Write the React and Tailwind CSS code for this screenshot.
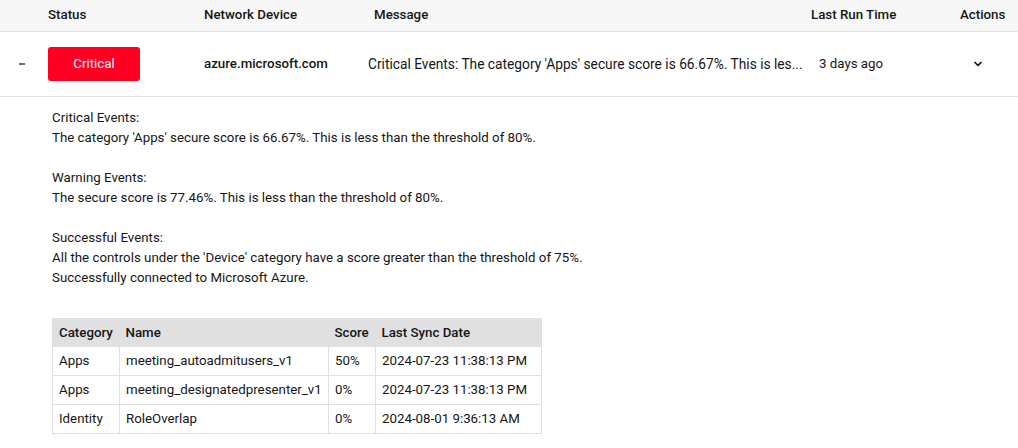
import { ChevronDown } from 'lucide-react';

const rows = [
    { category: 'Apps', name: 'meeting_autoadmitusers_v1', score: '50%', date: '2024-07-23 11:38:13 PM' },
    { category: 'Apps', name: 'meeting_designatedpresenter_v1', score: '0%', date: '2024-07-23 11:38:13 PM' },
    { category: 'Identity', name: 'RoleOverlap', score: '0%', date: '2024-08-01 9:36:13 AM' },
];

const App = () => {
    return (
        <div className="w-[1018px] h-[448px] bg-white text-[#161616] text-[13.3px] overflow-hidden" style={{ fontFamily: "Roboto, 'Liberation Sans', sans-serif" }}>
            {/* En-tête du tableau */}
            <div className="grid grid-cols-[48px_156px_164px_443px_149px_58px] h-[32px] pb-[2px] items-center bg-[#f7f7f7] border-b border-[#e0e0e0] font-medium">
                <div />
                <div>Status</div>
                <div>Network Device</div>
                <div className="pl-[6px]">Message</div>
                <div>Last Run Time</div>
                <div>Actions</div>
            </div>

            {/* Ligne principale */}
            <div className="grid grid-cols-[48px_156px_164px_443px_149px_58px] h-[65px] items-center border-b border-[#e0e0e0]">
                <div className="flex justify-center pr-[4px]">
                    <span className="block w-[6px] h-[2px] bg-[#6f6f6f]" />
                </div>
                <div>
                    <span className="flex items-center justify-center w-[92px] h-[34px] rounded-[3px] bg-[#ff0022] text-white">Critical</span>
                </div>
                <div className="font-medium">azure.microsoft.com</div>
                <div className="whitespace-nowrap overflow-hidden text-[13.75px]">Critical Events: The category 'Apps' secure score is 66.67%. This is les...</div>
                <div className="pl-[8px]">3 days ago</div>
                <div className="flex pl-[12px]">
                    <ChevronDown size={12} strokeWidth={3.5} />
                </div>
            </div>

            {/* Détails */}
            <div className="pl-[52px] pt-[11px] leading-[20px]">
                <p>Critical Events:</p>
                <p>The category 'Apps' secure score is 66.67%. This is less than the threshold of 80%.</p>
                <p className="mt-[20px]">Warning Events:</p>
                <p>The secure score is 77.46%. This is less than the threshold of 80%.</p>
                <p className="mt-[20px]">Successful Events:</p>
                <p>All the controls under the 'Device' category have a score greater than the threshold of 75%.</p>
                <p>Successfully connected to Microsoft Azure.</p>

                <table className="mt-[30px] table-fixed w-[489px] border-collapse border border-[#e0e0e0]">
                    <thead>
                        <tr className="bg-[#e0e0e0] h-[28px] text-left">
                            <th className="font-medium px-[6px] w-[67px]">Category</th>
                            <th className="font-medium px-[6px] w-[209px]">Name</th>
                            <th className="font-medium px-[6px] w-[47px]">Score</th>
                            <th className="font-medium px-[6px] w-[166px]">Last Sync Date</th>
                        </tr>
                    </thead>
                    <tbody>
                        {rows.map((r, i) => (
                            <tr key={i} className="h-[29px]">
                                <td className="border border-[#e0e0e0] px-[6px]">{r.category}</td>
                                <td className="border border-[#e0e0e0] px-[6px]">{r.name}</td>
                                <td className="border border-[#e0e0e0] px-[6px]">{r.score}</td>
                                <td className="border border-[#e0e0e0] px-[6px] whitespace-nowrap">{r.date}</td>
                            </tr>
                        ))}
                    </tbody>
                </table>
            </div>
        </div>
    );
};

export default App;
